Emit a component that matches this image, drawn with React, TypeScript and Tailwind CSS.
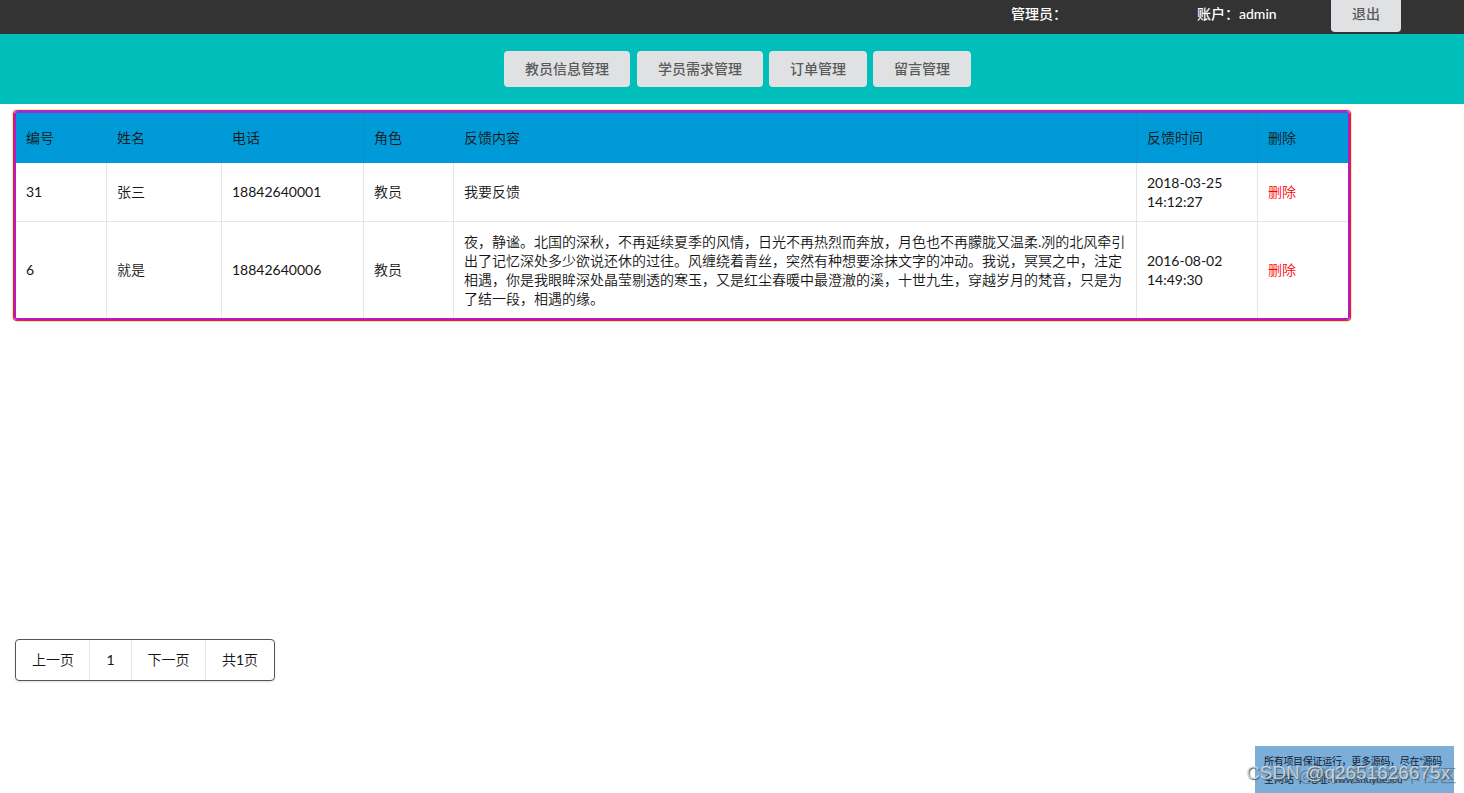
import clsx from 'clsx';

const navItems = ['教员信息管理', '学员需求管理', '订单管理', '留言管理'];

const columns = ['编号', '姓名', '电话', '角色', '反馈内容', '反馈时间', '删除'];

const feedbacks = [
  {
    id: 31,
    name: '张三',
    phone: '18842640001',
    role: '教员',
    lines: ['我要反馈'],
    date: '2018-03-25',
    time: '14:12:27',
  },
  {
    id: 6,
    name: '就是',
    phone: '18842640006',
    role: '教员',
    lines: [
      '夜，静谧。北国的深秋，不再延续夏季的风情，日光不再热烈而奔放，月色也不再朦胧又温柔.冽的北风牵引',
      '出了记忆深处多少欲说还休的过往。风缠绕着青丝，突然有种想要涂抹文字的冲动。我说，冥冥之中，注定',
      '相遇，你是我眼眸深处晶莹剔透的寒玉，又是红尘春暖中最澄澈的溪，十世九生，穿越岁月的梵音，只是为',
      '了结一段，相遇的缘。',
    ],
    date: '2016-08-02',
    time: '14:49:30',
  },
];

const grid = 'grid grid-cols-[90px_115px_142px_90px_683px_121px_91px]';

function Cell({ children, first, header, className }: { children: React.ReactNode; first?: boolean; header?: boolean; className?: string }) {
  return (
    <div
      className={clsx(
        'flex flex-col justify-center whitespace-nowrap pl-[10px]',
        !first && 'border-l',
        header ? 'border-[#0892cc]' : 'border-[#e4e5e6]',
        className ?? 'pb-[2px]',
      )}
    >
      {children}
    </div>
  );
}

export default function App() {
  return (
    <div className="h-[793px] flex flex-col relative overflow-hidden bg-white text-[14px] leading-[19px] text-[#161616] font-['Lato','Noto_Sans_CJK_SC',sans-serif]">
      <header className="h-[34px] shrink-0 bg-[#333333] flex text-white font-medium">
        <div className="w-[186px] ml-[1011px] pt-[4px]">管理员：</div>
        <div className="w-[134px] pt-[4px]">账户：admin</div>
        <button className="w-[70px] h-[32px] pb-[6px] rounded-b-[4px] bg-[#e0e1e2] text-[#5a5a5a] font-medium">退出</button>
      </header>

      <nav className="h-[70px] shrink-0 bg-[#00beb9] flex items-start gap-[6px] pl-[504px] pt-[17px]">
        {navItems.map((item, i) => (
          <button
            key={item}
            className={clsx('h-[36px] rounded-[4px] bg-[#e0e1e2] text-[#5a5a5a] font-medium px-[21px] pb-[2px]', i === 1 && 'ml-px')}
          >
            {item}
          </button>
        ))}
      </nav>

      <main className="flex-1 pt-[6px] pl-[13px] font-['Lato','Noto_Sans_CJK_SC_DemiLight','Noto_Sans_CJK_SC',sans-serif]">
        <div className="w-[1338px] h-[211px] rounded-[4px] border border-[#cc1c80] border-t-[#b52cc0] shadow-[0_0_0_1px_#ffec80] overflow-hidden">
          <div className="h-full rounded-[3px] border-2 border-[#bf16b8] border-t-[#982ddc]">
            <div className={clsx(grid, 'h-[50px] bg-[#009ad9]')}>
              {columns.map((col, i) => (
                <Cell key={col} first={i === 0} header>{col}</Cell>
              ))}
            </div>
            {feedbacks.map((f, i) => (
              <div key={f.id} className={clsx(grid, i === 0 ? 'h-[58px]' : 'h-[97px] border-t border-[#e4e5e6]')}>
                <Cell first>{f.id}</Cell>
                <Cell>{f.name}</Cell>
                <Cell>{f.phone}</Cell>
                <Cell>{f.role}</Cell>
                <Cell className={i === 0 ? 'pb-[2px]' : 'pb-0'}>
                  {f.lines.map(line => <p key={line}>{line}</p>)}
                </Cell>
                <Cell className="pb-0">
                  <p>{f.date}</p>
                  <p>{f.time}</p>
                </Cell>
                <Cell className="pb-[2px] text-[#ff0000]">删除</Cell>
              </div>
            ))}
          </div>
        </div>

        <div className="mt-[318px] ml-[2px] w-[260px] h-[42px] flex items-stretch rounded-[4px] border border-[#55565a] shadow-[0_1px_2px_0_rgba(34,36,38,0.15)]">
          <span className="w-[73px] flex items-center justify-center pl-px pb-[2px]">上一页</span>
          <span className="w-[42px] flex items-center justify-center border-l border-[#e6e6e6] pb-[2px]">1</span>
          <span className="w-[74px] flex items-center justify-center border-l border-[#e6e6e6] pb-[2px]">下一页</span>
          <span className="flex-1 flex items-center justify-center border-l border-[#e6e6e6] pb-[2px]">共1页</span>
        </div>
      </main>

      <div className="absolute left-[1255px] top-[746px] w-[199px] h-[47px] bg-[#7bafda] pl-[9px] pt-[6px] text-[10px] leading-[18px] tracking-[-0.3px] text-[#14202c] whitespace-nowrap">
        <p>所有项目保证运行，更多源码，尽在“源码</p>
        <p className="tracking-normal">全网站”，地址:www.shuyue.icu</p>
      </div>
      <div className="absolute left-[1299px] top-[765px] text-[17px] leading-[22px] tracking-[0.9px] text-[#4c6373]/60 whitespace-nowrap">@稀土掘金技术社区</div>
      <div className="absolute left-[1246px] top-[762px] font-['Liberation_Sans'] text-[19px] leading-[22px] text-[#dfe4e9]/80 [text-shadow:1px_1px_1px_#56616b] whitespace-nowrap">CSDN @q2651626675x</div>
    </div>
  );
}
